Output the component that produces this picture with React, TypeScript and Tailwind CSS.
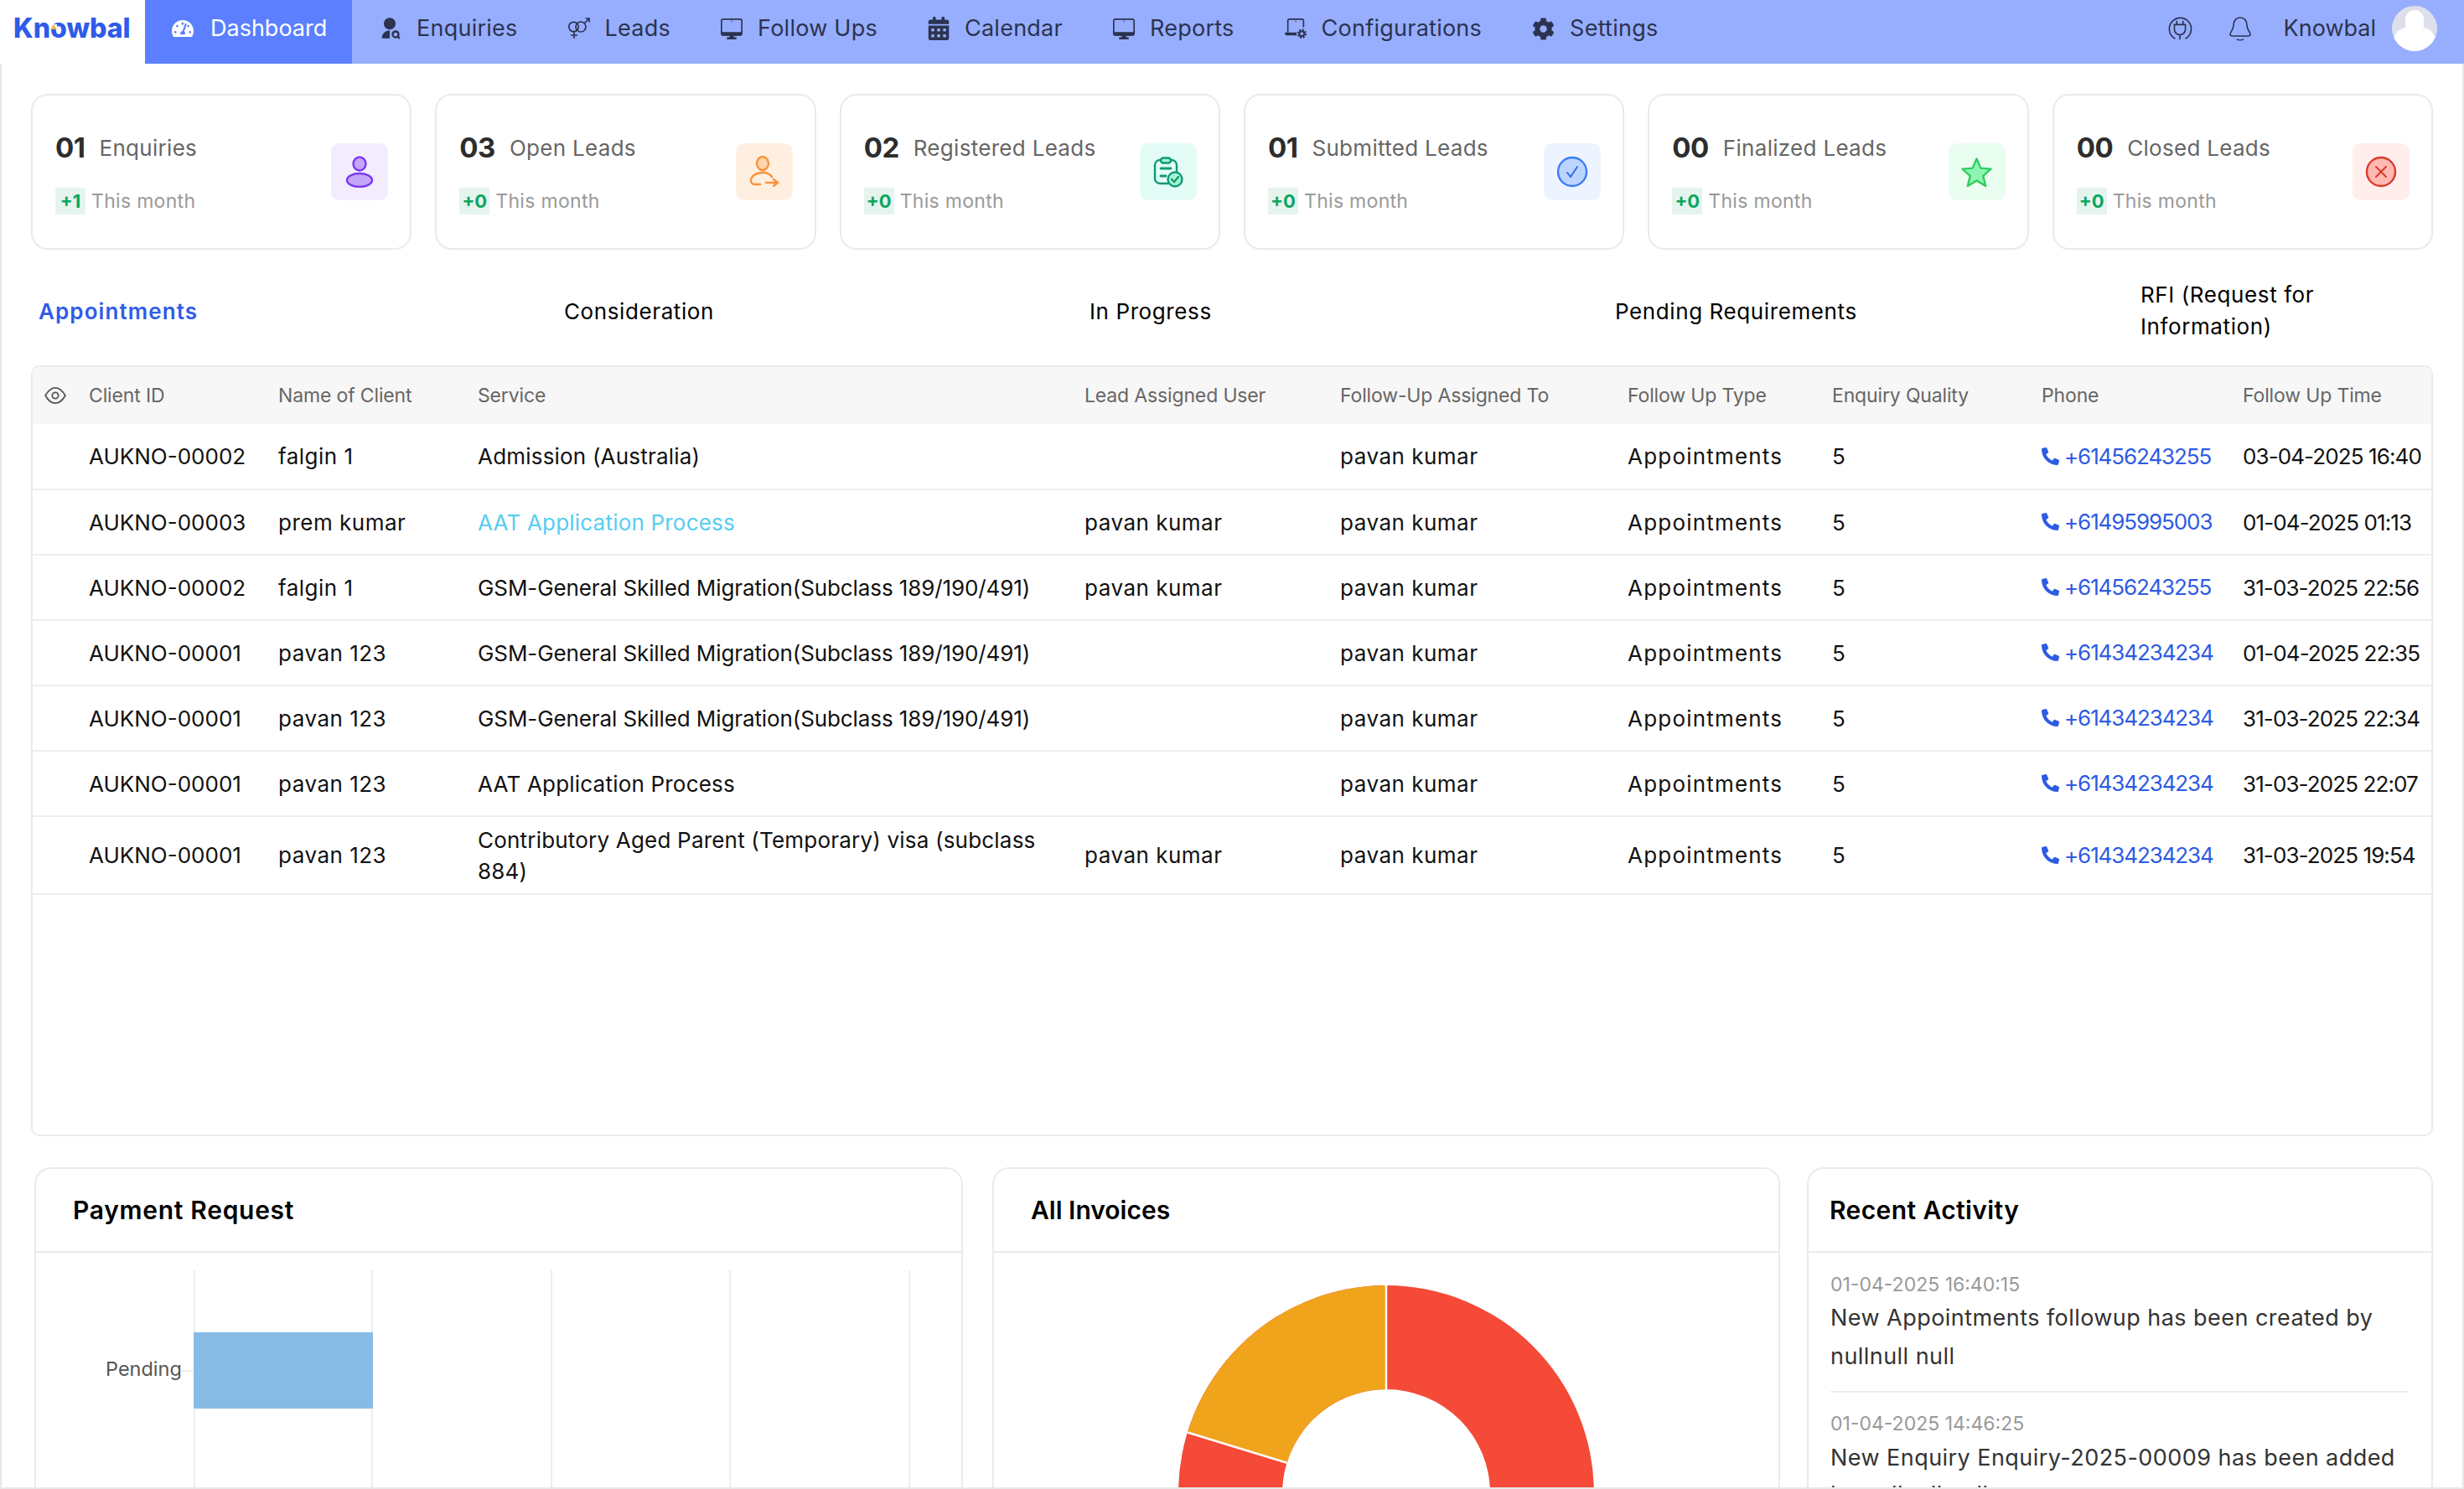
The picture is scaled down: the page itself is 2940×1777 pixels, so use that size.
import React from 'react';
import { FaCalendarAlt, FaCog, FaPhoneAlt, FaTachometerAlt } from 'react-icons/fa';
import { RiUserSearchFill } from 'react-icons/ri';

const font = { fontFamily: 'Inter, "Open Sans", sans-serif' };

const GenderIcon = () => (
  <svg viewBox="0 0 26 26" className="w-[26px] h-[26px]" fill="none" stroke="#2b3350" strokeWidth="1.700">
    <circle cx="6.500" cy="11" r="5.700" />
    <circle cx="15" cy="11" r="6" />
    <path d="M7 17v8M3 21h8M19.500 6.500L25 1M20.500 1H25v4.500" />
  </svg>
);

const MonitorIcon = () => (
  <svg viewBox="0 0 25 24" className="w-[26px] h-[25px]" fill="none">
    <rect x="0.800" y="0.800" width="23.400" height="18" rx="2.200" stroke="#2b3350" strokeWidth="1.600" />
    <path d="M0 15.500h25V17a3 3 0 0 1-3 3H3a3 3 0 0 1-3-3zM10 20h5v1.500h3V24H7v-2.500h3z" fill="#2b3350" />
    <path d="M12.500 2.500v1.500" stroke="#2b3350" strokeWidth="1" />
  </svg>
);

const ConfigIcon = () => (
  <svg viewBox="0 0 25 23" className="w-[26px] h-[24px]" fill="none">
    <path d="M3.500 16V2.500A1.700 1.700 0 0 1 5.200 0.800h14.600a1.700 1.700 0 0 1 1.700 1.700V10" stroke="#2b3350" strokeWidth="1.600" />
    <path d="M0 16h13.500v3.500H3a3 3 0 0 1-3-3z" fill="#2b3350" />
    <path d="M12.500 2.500v1.500" stroke="#2b3350" strokeWidth="1" />
    <circle cx="19.500" cy="17.500" r="2.800" stroke="#2b3350" strokeWidth="2" />
    <circle cx="19.500" cy="17.500" r="4.600" stroke="#2b3350" strokeWidth="1.800" strokeDasharray="2 1.600" />
  </svg>
);

const PlugIcon = () => (
  <svg viewBox="0 0 32 32" className="w-[32px] h-[30px]" fill="none" stroke="#2b3350" strokeWidth="1.800">
    <path d="M10 29a14 14 0 1 1 13 0" />
    <path d="M9 11h14v6a7 7 0 0 1-14 0zM12 11V6M20 11V6M16 24v6" />
  </svg>
);

const BellIcon = () => (
  <svg viewBox="0 0 30 30" className="w-[30px] h-[30px]" fill="none" stroke="#2b3350" strokeWidth="1.600">
    <path d="M15 2c-5 0-8 4-8 9 0 6-4 8-4 11 0 1 1 2 3 2h18c2 0 3-1 3-2 0-3-4-5-4-11 0-5-3-9-8-9z" />
    <path d="M11 28c2 1 6 1 8 0" />
  </svg>
);

const PersonIcon = () => (
  <svg viewBox="0 0 34 38" className="w-[34px] h-[38px]">
    <ellipse cx="17" cy="9.500" rx="7.500" ry="8" fill="#c4a5fa" stroke="#7c3aed" strokeWidth="2.400" />
    <ellipse cx="17" cy="29" rx="15" ry="8" fill="#c4a5fa" stroke="#7c3aed" strokeWidth="2.400" />
  </svg>
);

const OpenLeadIcon = () => (
  <svg viewBox="0 0 38 38" className="w-[38px] h-[38px]" fill="none" stroke="#fb923c" strokeWidth="2.400" strokeLinecap="round">
    <ellipse cx="17" cy="9" rx="7" ry="8" fill="#fed7aa" />
    <path d="M28 25c-2-3-6-5-11-5-8 0-14 4-14 10 0 2 2 4 5 4h6M21 32h13M30 28l5 4-5 4" />
  </svg>
);

const ClipboardIcon = () => (
  <svg viewBox="0 0 36 37" className="w-[36px] h-[37px]" fill="none" stroke="#0e9a74" strokeWidth="2.400" strokeLinecap="round">
    <path d="M17 32H8a6 6 0 0 1-6-6V10a6 6 0 0 1 6-6h14a6 6 0 0 1 6 6v8" />
    <rect x="9" y="1.500" width="12" height="6" rx="3" fill="#a7f3d0" />
    <path d="M9 14h12M9 23h6" strokeWidth="2.800" />
    <circle cx="26" cy="27" r="8.500" fill="#a7f3d0" />
    <path d="M22 27l3 3 5-6" />
  </svg>
);

const CheckIcon = () => (
  <svg viewBox="0 0 38 38" className="w-[38px] h-[38px]" fill="none">
    <circle cx="19" cy="19" r="17" fill="#bcd5ff" stroke="#3b7cf6" strokeWidth="2.400" />
    <path d="M13 20l4 5 8-12" stroke="#2f6fe8" strokeWidth="2" strokeLinecap="round" />
  </svg>
);

const StarIcon = () => (
  <svg viewBox="0 0 38 36" className="w-[37px] h-[36px]">
    <path d="M19 2l5 11.500 12.500 1-9.500 8.500 3 12.500-11-6.800L8 35.500l3-12.500-9.500-8.500 12.500-1z" fill="#8ef5b0" stroke="#2ecc5f" strokeWidth="2.400" strokeLinejoin="round" />
  </svg>
);

const CloseIcon = () => (
  <svg viewBox="0 0 38 38" className="w-[38px] h-[38px]" fill="none">
    <circle cx="19" cy="19" r="17" fill="#ffb9b2" stroke="#d93a2b" strokeWidth="2.400" />
    <path d="M13 13l12 12M25 13l-12 12" stroke="#d93a2b" strokeWidth="2" strokeLinecap="round" />
  </svg>
);

const navItems = [
  { label: 'Enquiries', icon: <RiUserSearchFill className="w-[28px] h-[30px] text-[#2b3350]" /> },
  { label: 'Leads', icon: <GenderIcon /> },
  { label: 'Follow Ups', icon: <MonitorIcon /> },
  { label: 'Calendar', icon: <FaCalendarAlt className="w-[26px] h-[28px] text-[#2b3350]" /> },
  { label: 'Reports', icon: <MonitorIcon /> },
  { label: 'Configurations', icon: <ConfigIcon /> },
  { label: 'Settings', icon: <FaCog className="w-[27px] h-[27px] text-[#2b3350]" /> },
];

const stats = [
  { num: '01', label: 'Enquiries', delta: '+1', tint: 'bg-[#f3ecff]', icon: <PersonIcon /> },
  { num: '03', label: 'Open Leads', delta: '+0', tint: 'bg-[#ffefe0]', icon: <OpenLeadIcon /> },
  { num: '02', label: 'Registered Leads', delta: '+0', tint: 'bg-[#e3fdf6]', icon: <ClipboardIcon /> },
  { num: '01', label: 'Submitted Leads', delta: '+0', tint: 'bg-[#edf3ff]', icon: <CheckIcon /> },
  { num: '00', label: 'Finalized Leads', delta: '+0', tint: 'bg-[#e9fdf0]', icon: <StarIcon /> },
  { num: '00', label: 'Closed Leads', delta: '+0', tint: 'bg-[#ffeeec]', icon: <CloseIcon /> },
];

const columns = ['Client ID', 'Name of Client', 'Service', 'Lead Assigned User', 'Follow-Up Assigned To', 'Follow Up Type', 'Enquiry Quality', 'Phone', 'Follow Up Time'];

const gsm = 'GSM-General Skilled Migration(Subclass 189/190/491)';
const rows = [
  ['AUKNO-00002', 'falgin 1', 'Admission (Australia)', '', '+61456243255', '03-04-2025 16:40'],
  ['AUKNO-00003', 'prem kumar', 'AAT Application Process', 'pavan kumar', '+61495995003', '01-04-2025 01:13'],
  ['AUKNO-00002', 'falgin 1', gsm, 'pavan kumar', '+61456243255', '31-03-2025 22:56'],
  ['AUKNO-00001', 'pavan 123', gsm, '', '+61434234234', '01-04-2025 22:35'],
  ['AUKNO-00001', 'pavan 123', gsm, '', '+61434234234', '31-03-2025 22:34'],
  ['AUKNO-00001', 'pavan 123', 'AAT Application Process', '', '+61434234234', '31-03-2025 22:07'],
  ['AUKNO-00001', 'pavan 123', 'Contributory Aged Parent (Temporary) visa (subclass 884)', 'pavan kumar', '+61434234234', '31-03-2025 19:54'],
];

const tabs = ['Appointments', 'Consideration', 'In Progress', 'Pending Requirements'];

const StatCard = ({ num, label, delta, tint, icon }: (typeof stats)[number]) => (
  <div className="flex-1 h-[186px] border-2 border-[#ebebeb] rounded-[20px] pl-[27px] pr-[26px] flex items-center justify-between">
    <div className="pt-[5px]">
      <div className="flex items-center gap-[17px] h-[38px]">
        <span className="text-[33px] font-bold tracking-[-0.5px] text-[#2d2d2d]">{num}</span>
        <span className="text-[26px] text-[#666] tracking-[0.3px]">{label}</span>
      </div>
      <div className="flex items-center gap-[7px] mt-[27px]">
        <span className="w-[36px] h-[32px] bg-[#e6f4ee] text-[#0aa65f] text-[22px] font-bold flex items-center justify-center">{delta}</span>
        <span className="text-[23px] text-[#999] tracking-[0.3px]">This month</span>
      </div>
    </div>
    <div className={`w-[68px] h-[68px] rounded-[10px] flex items-center justify-center ${tint}`}>{icon}</div>
  </div>
);

const App: React.FC = () => (
  <div className="h-[1777px] overflow-hidden bg-white flex flex-col" style={font}>
    <header className="h-[76px] shrink-0 flex items-stretch bg-[#97aeff]">
      <div className="relative w-[173px] bg-white flex items-center pl-[16px] pb-[8px]">
        <span className="text-[32px] font-extrabold text-[#2f5bea]">Knowbal</span>
        <svg viewBox="0 0 8 6" className="absolute left-[60px] top-[29px] w-[8px] h-[6px]">
          <rect width="8" height="6" fill="#fff" />
          <path d="M4 0l4 6H0z" fill="#f5b14c" />
        </svg>
      </div>
      <div className="w-[247px] bg-[#5b7fff] flex items-center gap-[20px] pl-[32px] pb-[8px] text-white text-[27px]">
        <FaTachometerAlt className="w-[26px] h-[26px]" />
        Dashboard
      </div>
      <nav className="flex items-center gap-[60px] pl-[31px] pb-[8px] flex-1">
        {navItems.map((item) => (
          <div key={item.label} className="flex items-center gap-[18px] text-[27px] tracking-[0.25px] text-[#2b3350]">
            {item.icon}
            {item.label}
          </div>
        ))}
      </nav>
      <div className="flex items-center pr-[32px] pb-[8px]">
        <PlugIcon />
        <div className="ml-[41px]"><BellIcon /></div>
        <span className="ml-[37px] text-[27px] text-[#2b3350]">Knowbal</span>
        <div className="ml-[19px] w-[54px] h-[54px] rounded-full bg-[#dde0ea] overflow-hidden flex flex-col items-center">
          <div className="w-[22px] h-[32px] mt-[5px] rounded-full bg-white" />
          <div className="w-[50px] h-[30px] -mt-[8px] rounded-t-[16px] bg-white" />
        </div>
      </div>
    </header>

    <main className="flex-1 min-h-0 overflow-hidden border-x-2 border-b-2 border-[#e8e8e8] pl-[35px] pr-[35px] flex flex-col">
      <section className="flex gap-[28px] mt-[36px]">
        {stats.map((s) => (
          <StatCard key={s.num + s.label} {...s} />
        ))}
      </section>

      <section className="flex items-center h-[78px] mt-[34px] mb-[1px] pl-[9px] text-[26px] text-black">
        {tabs.map((t, i) => (
          <div key={t} className={`w-[627px] shrink-0 ${i === 0 ? 'font-semibold tracking-[1.100px] text-[#2f5bea]' : 'tracking-[0.600px]'}`}>{t}</div>
        ))}
        <div className="w-[320px] leading-[38px] tracking-[0.600px]">RFI (Request for Information)</div>
      </section>

      <section className="mt-[25px] h-[920px] border-2 border-[#ebebeb] rounded-[10px] overflow-hidden">
        <table className="w-full table-fixed border-collapse text-left">
          <colgroup>
            <col className="w-[67px]" />
            <col className="w-[226px]" />
            <col className="w-[238px]" />
            <col className="w-[724px]" />
            <col className="w-[305px]" />
            <col className="w-[343px]" />
            <col className="w-[244px]" />
            <col className="w-[250px]" />
            <col className="w-[240px]" />
            <col className="w-[225px]" />
          </colgroup>
          <thead>
            <tr className="h-[68px] bg-[#f7f7f7] text-[23px] text-[#666]">
              <th className="font-normal pl-[14px]">
                <svg viewBox="0 0 28 24" className="w-[26px] h-[22px]" fill="none" stroke="#555" strokeWidth="2">
                  <path d="M1 12C5 5 9 2 14 2s9 3 13 10c-4 7-8 10-13 10S5 19 1 12z" />
                  <circle cx="14" cy="12" r="4" />
                </svg>
              </th>
              {columns.map((c) => (
                <th key={c} className="font-normal tracking-[-0.150px] whitespace-nowrap">{c}</th>
              ))}
            </tr>
          </thead>
          <tbody className="text-[26px] text-[#111]">
            {rows.map((r, i) => (
              <tr key={i} className={`border-b-2 border-[#eeeeee] ${i === 6 ? 'h-[93px]' : 'h-[78px]'}`}>
                <td />
                <td className="whitespace-nowrap">{r[0]}</td>
                <td className="whitespace-nowrap tracking-[0.500px]">{r[1]}</td>
                <td className={`pr-[24px] leading-[37px] ${r[2] === gsm ? 'tracking-[-0.100px]' : 'tracking-[0.200px]'} ${i === 1 ? 'text-[#56cdf0]' : ''}`}>{r[2]}</td>
                <td className="whitespace-nowrap tracking-[0.500px]">{r[3]}</td>
                <td className="whitespace-nowrap tracking-[0.500px]">pavan kumar</td>
                <td className="whitespace-nowrap tracking-[1.200px]">Appointments</td>
                <td>5</td>
                <td className="whitespace-nowrap text-[#2d5be3]">
                  <span className="inline-flex items-center gap-[6px] tracking-[-1.100px]">
                    <FaPhoneAlt className="w-[21px] h-[21px]" />
                    {r[4]}
                  </span>
                </td>
                <td className="whitespace-nowrap tracking-[-0.900px]">{r[5]}</td>
              </tr>
            ))}
          </tbody>
        </table>
      </section>

      <section className="flex mt-[37px] pl-[4px] flex-1 min-h-0">
        <div className="w-[1108px] mr-[35px] border-2 border-b-0 border-[#ebebeb] rounded-t-[20px] overflow-hidden">
          <h3 className="h-[100px] flex items-center pl-[44px] text-[30px] font-semibold tracking-[0.700px] text-black border-b-2 border-[#ebebeb]">Payment Request</h3>
          <div className="relative h-[300px] mt-[21px]">
            <div className="absolute left-[188px] top-0 bottom-0 flex">
              <div className="w-[214px] h-full border-x-2 border-[#eeeeee]" />
              <div className="w-[214px] h-full border-r-2 border-[#eeeeee]" />
              <div className="w-[213px] h-full border-r-2 border-[#eeeeee]" />
              <div className="w-[214px] h-full border-r-2 border-[#eeeeee]" />
            </div>
            <div className="absolute left-[188px] top-[74px] w-[214px] h-[91px] bg-[#87bbe6]" />
            <div className="absolute left-[174px] top-[119px] w-[14px] h-[2px] bg-[#eeeeee]" />
            <span className="absolute left-[83px] top-[102px] text-[23.500px] leading-[32px] text-[#555]">Pending</span>
          </div>
        </div>
        <div className="w-[940px] mr-[32px] border-2 border-b-0 border-[#ebebeb] rounded-t-[20px] overflow-hidden">
          <h3 className="h-[100px] flex items-center pl-[44px] text-[30px] font-semibold text-black border-b-2 border-[#ebebeb]">All Invoices</h3>
          <svg viewBox="0 0 500 244" className="block w-[500px] h-[244px] mx-auto mt-[39px]">
            <path d="M250 0A248 248 0 1 1 249.900 496 248 248 0 1 1 250 0ZM250 124A124 124 0 1 0 250.100 372 124 124 0 1 0 250 124Z" fill="#f44a37" fillRule="evenodd" />
            <path d="M250 0A248 248 0 0 0 13 175.500L131.400 211.700A124 124 0 0 1 250 124Z" fill="#f0a41c" />
            <path d="M250 0V124M13 175.500L131.400 211.700" stroke="#fff" strokeWidth="2.500" />
          </svg>
        </div>
        <div className="w-[747px] border-2 border-b-0 border-[#ebebeb] rounded-t-[20px] overflow-hidden">
          <h3 className="h-[100px] flex items-center pl-[25px] text-[30px] font-semibold tracking-[0.400px] text-black border-b-2 border-[#ebebeb]">Recent Activity</h3>
          <div className="pl-[26px] pr-[28px] pt-[22px]">
            <div className="text-[23px] leading-[32px] text-[#999]">01-04-2025 16:40:15</div>
            <p className="mt-[1px] text-[27px] leading-[46px] tracking-[0.450px] text-[#333] border-b-2 border-[#eeeeee] pb-[18px]">New Appointments followup has been created by nullnull null</p>
            <div className="mt-[21px] text-[23px] leading-[32px] text-[#999]">01-04-2025 14:46:25</div>
            <p className="mt-[3px] text-[27px] leading-[44px] tracking-[0.450px] text-[#333]">New Enquiry Enquiry-2025-00009 has been added by nullnull null</p>
          </div>
        </div>
      </section>
    </main>
  </div>
);

export default App;
